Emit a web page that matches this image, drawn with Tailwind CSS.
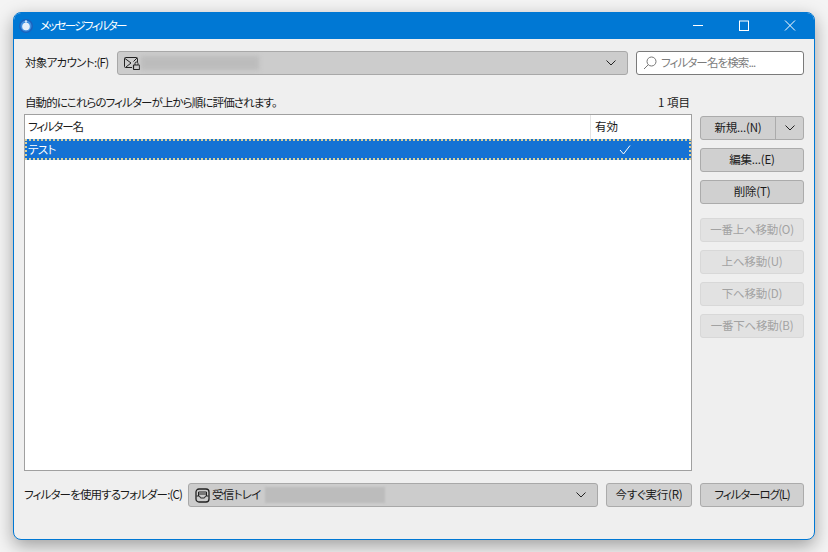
<!DOCTYPE html>
<html lang="ja"><head><meta charset="utf-8">
<script src="https://cdn.jsdelivr.net/npm/@tailwindcss/browser@4"></script></head>
<body class="w-[828px] h-[552px] overflow-hidden bg-[#f4f4f4] font-['Noto_Sans_CJK_JP','Noto_Sans',sans-serif] text-[11.5px] text-[#1a1a1a] [font-feature-settings:'palt'] tracking-[-0.2px] whitespace-nowrap pt-[12px] pl-[13px]">
<div class="w-[802px] h-[528px] rounded-lg border border-[#0078d4] bg-[#efefef] shadow-[0_6px_18px_rgba(0,0,0,0.35)] flex flex-col overflow-hidden">
  <div class="h-[26px] shrink-0 bg-[#0078d4] flex items-center text-white">
    <svg class="ml-[4px]" width="16" height="16" viewBox="0 0 16 16"><circle cx="8" cy="8" r="7" fill="#1a62bd"/><circle cx="8" cy="8" r="5.500" fill="#3f8ee0"/><circle cx="8" cy="8.500" r="3.800" fill="#e4eefa"/><circle cx="8" cy="3.500" r="1.200" fill="#cfe2f7"/></svg>
    <span class="ml-[6px] text-[11.5px] tracking-[-1.7px]">メッセージフィルター</span>
    <div class="ml-auto flex items-center">
      <svg width="46" height="26" viewBox="0 0 46 26"><path d="M17 12.500H27" stroke="#fff"/></svg>
      <svg width="46" height="26" viewBox="0 0 46 26"><rect x="17.500" y="8" width="9" height="9.500" fill="none" stroke="#fff"/></svg>
      <svg width="46" height="26" viewBox="0 0 46 26"><path d="M17 7.500L27 17.500M27 7.500L17 17.500" stroke="#fff"/></svg>
    </div>
  </div>
  <div class="flex-1 flex flex-col pl-[10px] pr-[10px]">
    <div class="mt-[12px] h-[24px] flex items-center">
      <span class="ml-[1px] w-[92px] tracking-[-0.7px]">対象アカウント:(F)</span>
      <div class="w-[511px] h-[24px] rounded-[3px] border border-[#a8a8a8] bg-[#cccccc] flex items-center pl-[6px] pr-[11px]">
        <svg width="16" height="16" viewBox="0 0 16 16" fill="none" stroke="#222"><path d="M8 12.500H1.500Q.5 12.500 .5 11.500V3.500Q.5 2.500 1.500 2.500H12.500Q13.500 2.500 13.500 3.500V7M1 3.500L7 8L2 12M13 3L9.500 6.500"/><rect x="9.500" y="10" width="6" height="4.500" rx=".5" stroke-width="1.200"/><path d="M11 10V8.500a1.500 1.500 0 0 1 3 0V10"/></svg>
        <div class="ml-[1px] w-[118px] h-[14px] bg-[#bcbcbc] blur-[2px]"></div>
        <svg class="ml-auto" width="10" height="6" viewBox="0 0 10 6" fill="none" stroke="#222"><path d="M.5 .5L5 5L9.500 .5"/></svg>
      </div>
      <div class="ml-[8px] w-[168px] h-[24px] rounded-[3px] border border-[#7a7a7a] bg-white flex items-center pl-[6px] text-[#7c7c7c]">
        <svg width="14" height="14" viewBox="0 0 14 14" fill="none" stroke="#777"><circle cx="8.500" cy="5.500" r="4.500"/><path d="M5.300 8.700L1 13"/></svg>
        <span class="ml-[4px] tracking-[-0.9px]">フィルター名を検索...</span>
      </div>
    </div>
    <div class="mt-[20px] h-[16px] flex items-center justify-between w-[666px] leading-none">
      <span class="ml-[1px] tracking-[-0.9px]">自動的にこれらのフィルターが上から順に評価されます。</span>
      <span class="tracking-[0px]">1 項目</span>
    </div>
    <div class="mt-[3px] flex h-[366px]">
      <div class="w-[668px] h-[357px] border border-[#a0a0a0] bg-white flex flex-col">
        <div class="h-[24px] flex items-center">
          <div class="w-[566px] h-full pl-[3px] flex items-center border-r border-[#e4e4e4] tracking-[-1.2px]">フィルター名</div>
          <div class="pl-[4px] tracking-[0px]">有効</div>
        </div>
        <div class="h-[21px] bg-[#1572d4] border-2 border-dotted border-[#d8d09a] flex items-center text-white">
          <div class="w-[564px] pl-[1px] tracking-[-0.7px]">テスト</div>
          <svg class="ml-[28px]" width="12" height="10" viewBox="0 0 12 10" fill="none" stroke="#fff"><path d="M1 5L4.500 9L11 .5"/></svg>
        </div>
      </div>
      <div class="ml-[8px] w-[104px] flex flex-col">
        <div class="mt-[2px] h-[24px] rounded-[3px] border border-[#ababab] bg-[#d0d0d0] flex">
          <div class="w-[75px] flex items-center justify-center border-r border-[#ababab]">新規...(N)</div>
          <div class="flex-1 flex items-center justify-center"><svg width="10" height="6" viewBox="0 0 10 6" fill="none" stroke="#222"><path d="M.5 .5L5 5L9.500 .5"/></svg></div>
        </div>
        <div class="mt-[8px] h-[24px] rounded-[3px] border border-[#ababab] bg-[#d0d0d0] flex items-center justify-center">編集...(E)</div>
        <div class="mt-[8px] h-[24px] rounded-[3px] border border-[#ababab] bg-[#d0d0d0] flex items-center justify-center">削除(T)</div>
        <div class="mt-[14px] h-[24px] rounded-[3px] border border-[#d8d8d8] bg-[#e2e2e2] text-[#a2a2a2] flex items-center justify-center">一番上へ移動(O)</div>
        <div class="mt-[8px] h-[24px] rounded-[3px] border border-[#d8d8d8] bg-[#e2e2e2] text-[#a2a2a2] flex items-center justify-center">上へ移動(U)</div>
        <div class="mt-[8px] h-[24px] rounded-[3px] border border-[#d8d8d8] bg-[#e2e2e2] text-[#a2a2a2] flex items-center justify-center">下へ移動(D)</div>
        <div class="mt-[8px] h-[24px] rounded-[3px] border border-[#d8d8d8] bg-[#e2e2e2] text-[#a2a2a2] flex items-center justify-center">一番下へ移動(B)</div>
      </div>
    </div>
    <div class="mt-[3px] h-[24px] flex items-center">
      <span class="w-[164px] tracking-[-0.85px]">フィルターを使用するフォルダー:(C)</span>
      <div class="w-[410px] h-[24px] rounded-[3px] border border-[#a8a8a8] bg-[#cccccc] flex items-center pl-[6px] pr-[11px]">
        <svg width="15" height="15" viewBox="0 0 15 15" fill="none" stroke="#222"><rect x="1" y="1" width="13" height="13" rx="3" stroke-width="1.300"/><path d="M3.500 8V4H11.500V8M1.500 8H4.500L5.500 10H9.500L10.500 8H13.500" /><path d="M3.500 6H11.500"/></svg>
        <span class="ml-[2px] tracking-[-0.7px]">受信トレイ</span>
        <div class="ml-[4px] w-[120px] h-[16px] bg-[#bcbcbc] blur-[1px]"></div>
        <svg class="ml-auto" width="10" height="6" viewBox="0 0 10 6" fill="none" stroke="#222"><path d="M.5 .5L5 5L9.500 .5"/></svg>
      </div>
      <div class="ml-[8px] w-[86px] h-[24px] rounded-[3px] border border-[#ababab] bg-[#d0d0d0] flex items-center justify-center">今すぐ実行(R)</div>
      <div class="ml-[8px] w-[104px] h-[24px] rounded-[3px] border border-[#ababab] bg-[#d0d0d0] flex items-center justify-center tracking-[-1.1px]">フィルターログ(L)</div>
    </div>
  </div>
</div>
</body></html>
